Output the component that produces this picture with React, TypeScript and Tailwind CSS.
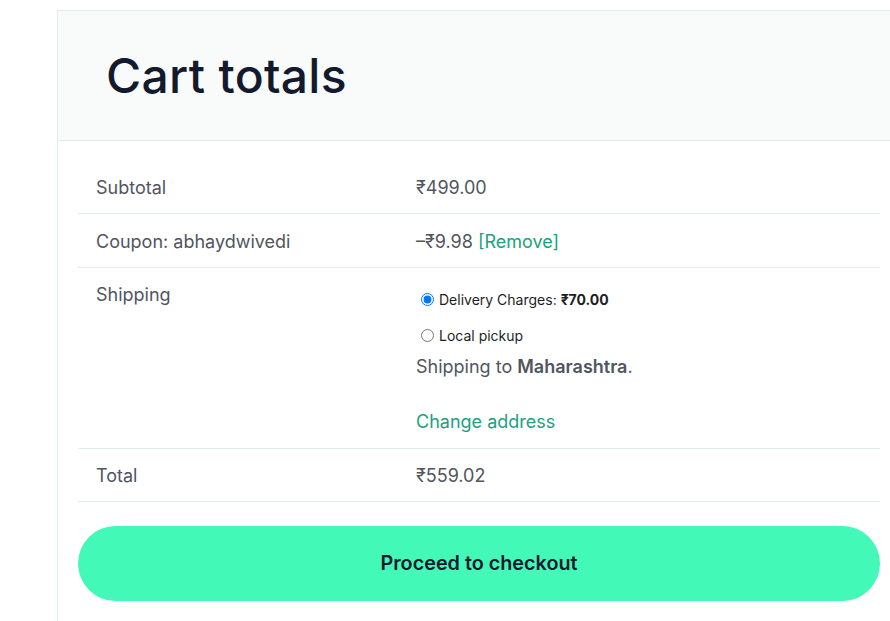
import React from 'react';

const rowCls = 'grid grid-cols-[338px_1fr] border-b border-[#dfeee8]';

export default function App() {
  return (
    <div className="min-h-screen overflow-hidden bg-white pt-[10px] pl-[57px] font-['Inter','Liberation_Sans',sans-serif]">
      <div className="w-[843px] border-l border-t border-[#dfeee8]">
        {/* Header */}
        <div className="flex h-[130px] items-center border-b border-[#dfeee8] bg-[#f9fafa] pl-[48px]">
          <h2 className="text-[48px] font-medium tracking-[0.3px] text-[#141a2e]">Cart totals</h2>
        </div>

        <div className="px-[20px] pt-[20px] pb-[20px]">
          <div className="text-[18px] text-[#51555e]">
            <div className={`${rowCls} h-[53px] items-center pt-[1px]`}>
              <div className="pl-[18px]">Subtotal</div>
              <div>₹499.00</div>
            </div>
            <div className={`${rowCls} h-[54px] items-center pt-[1px]`}>
              <div className="pl-[18px]">Coupon: abhaydwivedi</div>
              <div>
                –₹9.98 <a className="text-[#22a07d]">[Remove]</a>
              </div>
            </div>
            <div className={`${rowCls} h-[181px] pt-[13px]`}>
              <div className="pl-[18px]">Shipping</div>
              <div>
                <ul className="mt-[8px] text-[14px] text-[#1e1e1e]">
                  <li className="flex items-center">
                    <input type="radio" name="ship" defaultChecked className="ml-[5px] mr-[5px] h-[13px] w-[13px]" />
                    <label>
                      Delivery Charges: <span className="font-bold">₹70.00</span>
                    </label>
                  </li>
                  <li className="mt-[15px] flex items-center">
                    <input type="radio" name="ship" className="ml-[5px] mr-[5px] h-[13px] w-[13px]" />
                    <label>Local pickup</label>
                  </li>
                </ul>
                <p className="mt-[7px]">
                  Shipping to <strong className="font-semibold">Maharashtra</strong>.
                </p>
                <a className="mt-[28px] block text-[#22a07d]">Change address</a>
              </div>
            </div>
            <div className={`${rowCls} h-[53px] items-center pt-[1px]`}>
              <div className="pl-[18px]">Total</div>
              <div>₹559.02</div>
            </div>
          </div>

          <button className="mt-[24px] flex h-[75px] w-full items-center justify-center rounded-full bg-[#43f9b8] text-[19.8px] font-semibold text-[#141a2e]">
            Proceed to checkout
          </button>
        </div>
      </div>
    </div>
  );
}
